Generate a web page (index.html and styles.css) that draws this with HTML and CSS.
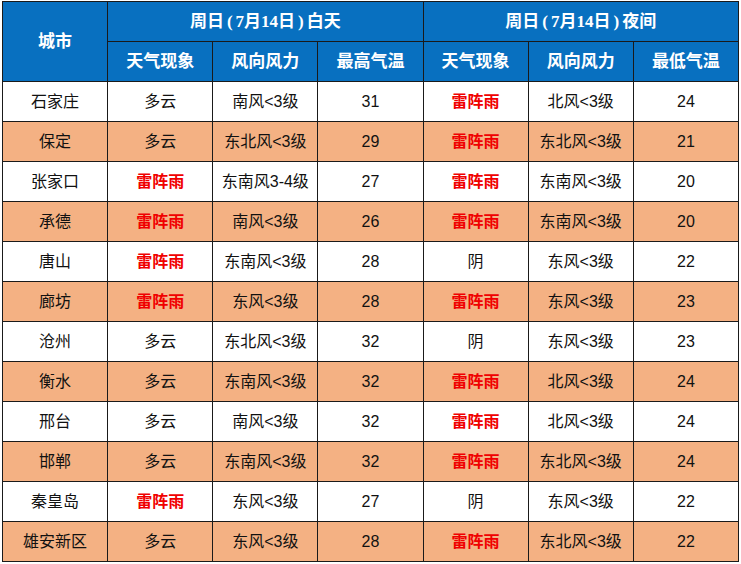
FILE: index.html
```html
<!DOCTYPE html>
<html lang="zh">
<head>
<meta charset="utf-8">
<link rel="stylesheet" href="styles.css">
</head>
<body>
<table class="wx">
  <colgroup>
    <col class="c"><col class="c"><col class="c"><col class="c"><col class="c"><col class="c"><col class="c">
  </colgroup>
  <thead>
    <tr>
      <th rowspan="2" class="city-h">城市</th>
      <th colspan="3" class="period">周日<span class="num p">(</span><span class="num">7</span>月<span class="num">14</span>日<span class="num p">)</span>白天</th>
      <th colspan="3" class="period">周日<span class="num p">(</span><span class="num">7</span>月<span class="num">14</span>日<span class="num p">)</span>夜间</th>
    </tr>
    <tr>
      <th>天气现象</th><th>风向风力</th><th>最高气温</th>
      <th>天气现象</th><th>风向风力</th><th>最低气温</th>
    </tr>
  </thead>
  <tbody>
    <tr><td>石家庄</td><td>多云</td><td>南风&lt;3级</td><td>31</td><td class="r">雷阵雨</td><td>北风&lt;3级</td><td>24</td></tr>
    <tr class="alt"><td>保定</td><td>多云</td><td>东北风&lt;3级</td><td>29</td><td class="r">雷阵雨</td><td>东北风&lt;3级</td><td>21</td></tr>
    <tr><td>张家口</td><td class="r">雷阵雨</td><td>东南风3-4级</td><td>27</td><td class="r">雷阵雨</td><td>东南风&lt;3级</td><td>20</td></tr>
    <tr class="alt"><td>承德</td><td class="r">雷阵雨</td><td>南风&lt;3级</td><td>26</td><td class="r">雷阵雨</td><td>东南风&lt;3级</td><td>20</td></tr>
    <tr><td>唐山</td><td class="r">雷阵雨</td><td>东南风&lt;3级</td><td>28</td><td>阴</td><td>东风&lt;3级</td><td>22</td></tr>
    <tr class="alt"><td>廊坊</td><td class="r">雷阵雨</td><td>东风&lt;3级</td><td>28</td><td class="r">雷阵雨</td><td>东风&lt;3级</td><td>23</td></tr>
    <tr><td>沧州</td><td>多云</td><td>东北风&lt;3级</td><td>32</td><td>阴</td><td>东风&lt;3级</td><td>23</td></tr>
    <tr class="alt"><td>衡水</td><td>多云</td><td>东南风&lt;3级</td><td>32</td><td class="r">雷阵雨</td><td>北风&lt;3级</td><td>24</td></tr>
    <tr><td>邢台</td><td>多云</td><td>南风&lt;3级</td><td>32</td><td class="r">雷阵雨</td><td>北风&lt;3级</td><td>24</td></tr>
    <tr class="alt"><td>邯郸</td><td>多云</td><td>东南风&lt;3级</td><td>32</td><td class="r">雷阵雨</td><td>东北风&lt;3级</td><td>24</td></tr>
    <tr><td>秦皇岛</td><td class="r">雷阵雨</td><td>东风&lt;3级</td><td>27</td><td>阴</td><td>东风&lt;3级</td><td>22</td></tr>
    <tr class="alt"><td>雄安新区</td><td>多云</td><td>东风&lt;3级</td><td>28</td><td class="r">雷阵雨</td><td>东北风&lt;3级</td><td>22</td></tr>
  </tbody>
</table>
</body>
</html>
```
FILE: styles.css
```css
html, body {
  margin: 0;
  padding: 0;
  background: #ffffff;
}
body {
  padding-left: 2px;
  padding-top: 1px;
}
.wx {
  border-collapse: collapse;
  table-layout: fixed;
  width: 737px;
  font-family: "Liberation Sans", "Noto Sans CJK SC", sans-serif;
  font-size: 16px;
  color: #111111;
}
.wx col.c {
  width: 105px;
}
.wx th, .wx td {
  border: 1px solid #1a1a1a;
  text-align: center;
  vertical-align: middle;
  padding: 0;
  height: 39px;
  line-height: 20px;
}
.wx th {
  background: #0870c0;
  color: #ffffff;
  font-weight: bold;
  font-size: 17px;
}
.wx .city-h {
  font-size: 17px;
}
.wx .period .num {
  font-family: "Liberation Serif", "Noto Sans CJK SC", serif;
}
.wx .period .p {
  margin: 0 3px;
}
.wx tr.alt td {
  background: #f4b183;
}
.wx td.r {
  color: #f00000;
  font-weight: bold;
}
```
